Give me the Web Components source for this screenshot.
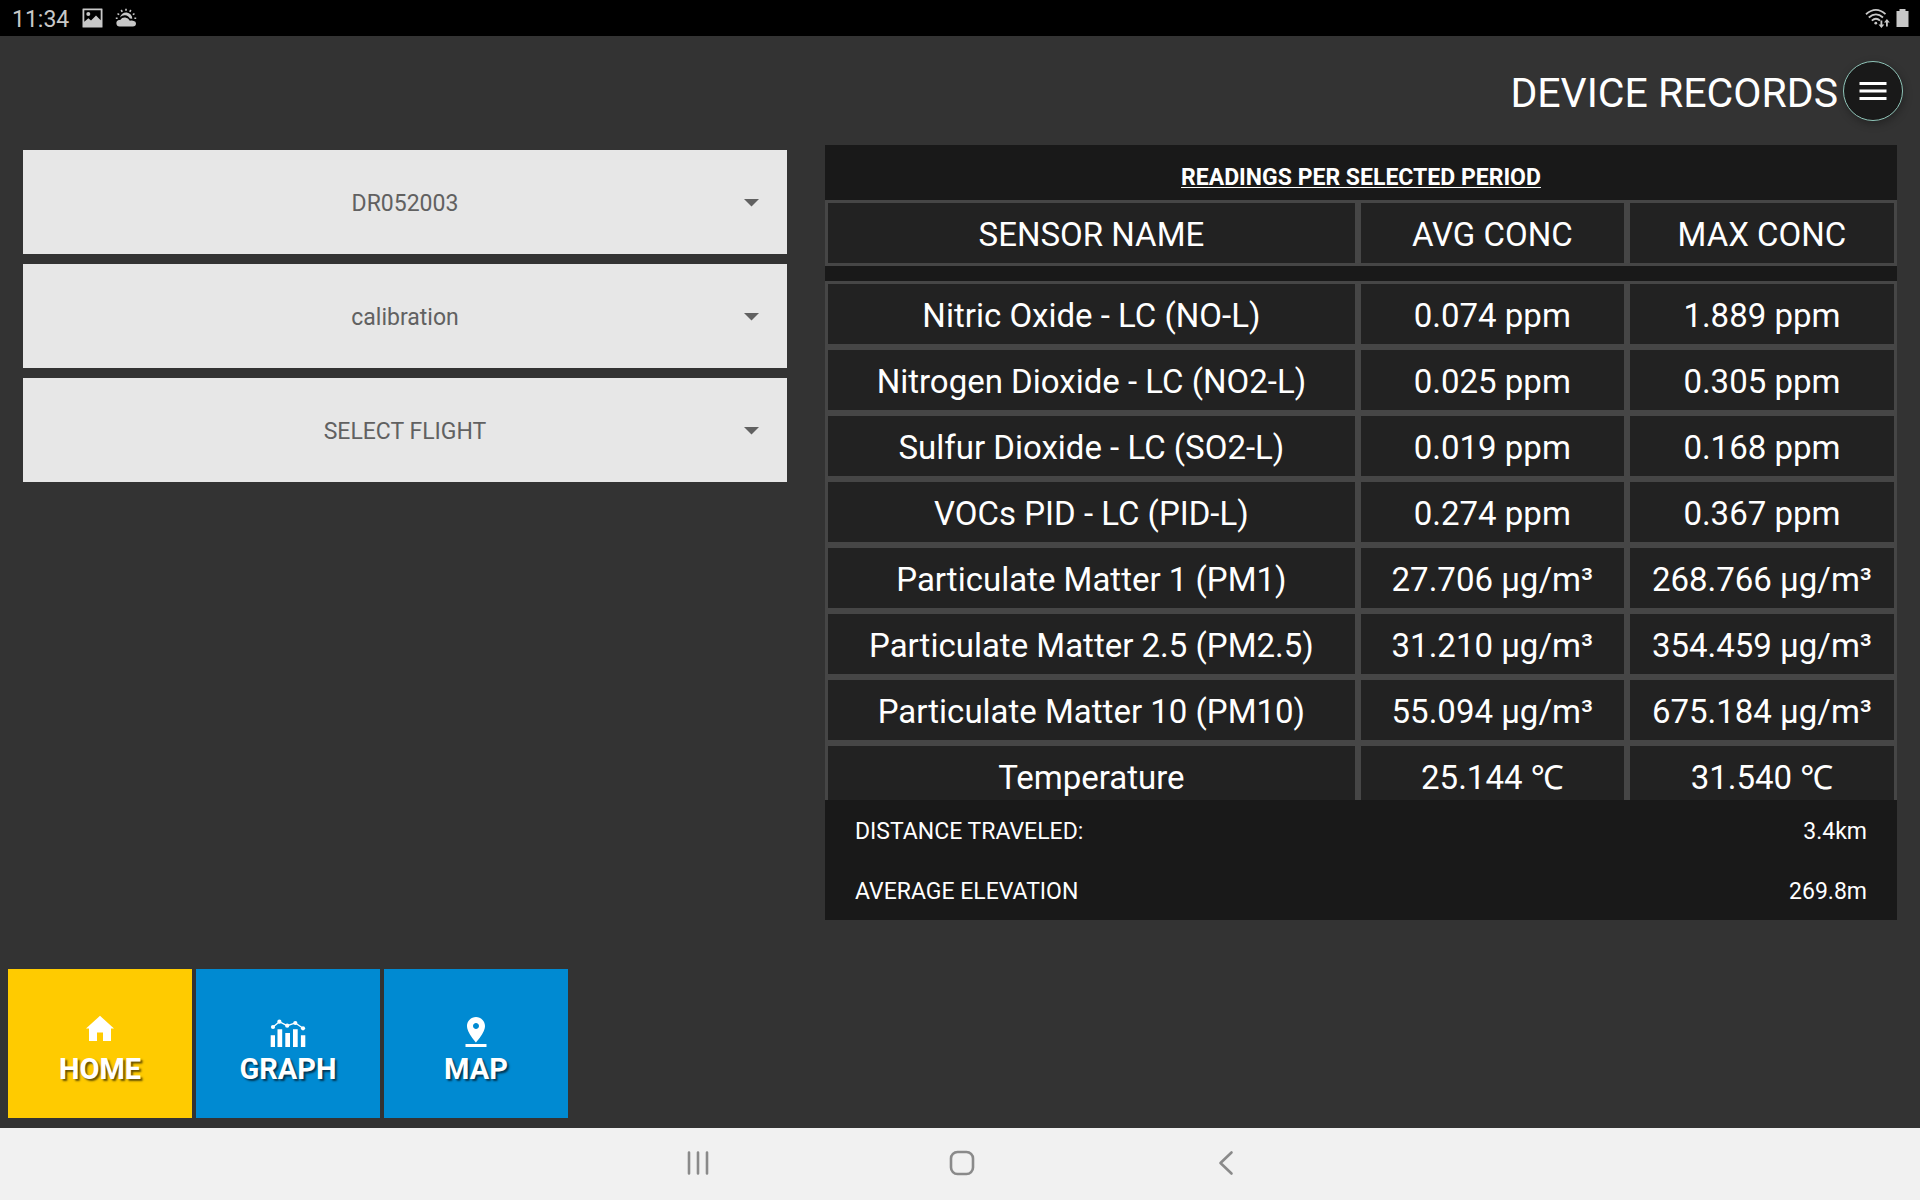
<!DOCTYPE html>
<html lang="en">
<head>
<meta charset="utf-8">
<title>Device Records</title>
<style>
  html, body { margin: 0; height: 100%; }
  body { background: #333; color: #fff; font-family: Roboto, "Noto Sans", sans-serif; }
</style>
</head>
<body>
<records-app></records-app>

<script>
const define = (name, html, setup) => {
  const template = document.createElement('template');
  template.innerHTML = html;
  customElements.define(name, class extends HTMLElement {
    connectedCallback() {
      if (this.shadowRoot) return;
      this.attachShadow({ mode: 'open' }).append(template.content.cloneNode(true));
      if (setup) setup(this, this.shadowRoot);
    }
  });
};

/* Android status bar: clock, notifications, wifi and battery */
define('status-bar', `
<style>
  :host { display: flex; flex: none; align-items: center; justify-content: space-between; height: 36px; padding: 0 11px; background: #000; color: #c8c8c8; }
  div { display: flex; align-items: center; gap: 12px; }
  .right { gap: 6px; }
  time { font-size: 23px; line-height: 32px; padding: 4px 1px 0; }
  svg { display: block; fill: currentColor; }
</style>
<div>
  <time>11:34</time>
  <svg width="21" height="20" viewBox="0 0 21 20" aria-label="Picture"><path fill-rule="evenodd" d="M1 .5h19q.5 0 .5.5v18q0 .5-.5.5H1q-.5 0-.5-.5V1Q.5.5 1 .5zM2.3 2.3v11.500l4-3.600 2.700 2.400 5-5.100 4.700 4.700V2.300z"/><circle cx="6.300" cy="6" r="2"/></svg>
  <svg width="22" height="20" viewBox="0 0 22 20" aria-label="Weather"><path d="M5 9.500a6.200 6.200 0 0 1 12.300 1.200l-2.400-.2A6 6 0 0 0 5 9.500z"/><path d="M4.500 18.500a3.300 3.300 0 0 1-.6-6.500l1.300-.1a5.500 5.500 0 0 1 9.600.8q1-.5 2.200-.2l1.800.4q2.200.4 2.200 2.600 0 3-3.300 3z"/><path d="M11 .8v2M6.200 2l1 1.800M15.800 2l-1 1.800M2.500 5.600l1.700 1M19.500 5.600l-1.700 1M.8 10.200h1.800M19.400 10.200h1.800" fill="none" stroke="currentColor" stroke-width="1.600"/></svg>
</div>
<div class="right">
  <svg width="25" height="20" viewBox="0 0 25 20" aria-label="Wifi"><path d="M1 6.200Q11 -2.500 20.500 6.200M3.800 9.500Q11 3.200 18 9.500M6.800 12.600Q11 9 15 12.600" fill="none" stroke="currentColor" stroke-width="1.800"/><circle cx="10.800" cy="15.200" r="1.400"/><path d="M15.500 12.500h1.800v4h2l-2.900 3.500-2.900-3.500h2zM21 18.500h1.800v-4h2L21.900 11 19 14.500h2z"/></svg>
  <svg width="13" height="20" viewBox="0 0 13 20" aria-label="Battery"><path d="M3.500 1h6v2H12.500v16H.5V3h3z"/></svg>
</div>`);

/* Page heading with the round menu button */
define('page-header', `
<style>
  :host { display: flex; flex: none; align-items: center; justify-content: flex-end; gap: 5px; padding: 25px 17px 24px; }
  h1 { margin: 0; padding-top: 4px; font-size: 41px; line-height: 56px; font-weight: 400; }
  button { display: grid; place-items: center; box-sizing: border-box; width: 60px; height: 60px; padding: 0; border: 1px solid #8fc4b8; border-radius: 50%; background: #191919; color: #fff; box-shadow: 1px 3px 8px rgba(0,0,0,.3); }
  svg { display: block; fill: currentColor; }
</style>
<h1><slot></slot></h1>
<button aria-label="Menu"><svg width="36" height="36" viewBox="0 0 24 24"><path d="M3 18h18v-2H3v2zm0-5h18v-2H3v2zm0-7v2h18V6H3z"/></svg></button>`);

/* Drop-down; its options are passed in as children */
define('select-field', `
<style>
  :host { display: grid; align-items: center; height: 104px; background: #e7e7e7; color: #616161; }
  select, svg { grid-area: 1 / 1; }
  select { appearance: none; box-sizing: border-box; width: 100%; height: 100%; margin: 0; padding: 2px 40px 0; border: 0; border-radius: 0; background: none; color: inherit; font: inherit; font-size: 23px; text-align: center; text-align-last: center; }
  svg { justify-self: end; margin-right: 28px; fill: currentColor; pointer-events: none; }
</style>
<select></select>
<svg width="15" height="10" viewBox="0 0 15 10"><path d="M0 2h15L7.500 9.500z"/></svg>`, (host, root) => {
  const select = root.querySelector('select');
  select.setAttribute('aria-label', host.getAttribute('label'));
  select.append(...host.querySelectorAll('option'));
});

/* Table of sensor readings with a fixed summary under it */
define('readings-panel', `
<style>
  :host { display: flex; flex-direction: column; min-height: 0; background: #191919; }
  h2 { flex: none; margin: 0; padding: 15px 0 4px; font-size: 23px; line-height: 36px; font-weight: 700; text-align: center; text-decoration: underline; text-decoration-thickness: 1px; text-underline-offset: 2px; }
  .scroll { flex: 1; min-height: 0; overflow: auto; scrollbar-width: none; }
  table { width: 100%; table-layout: fixed; border-collapse: separate; border-spacing: 0; }
  th, td { box-sizing: border-box; height: 66px; padding: 4px 0 0; border: 3px solid #464646; background: #222; font-size: 33px; line-height: 56px; font-weight: 400; text-align: center; white-space: nowrap; }
  th:nth-child(1) { width: 49.7%; }
  th:nth-child(2) { width: 25.1%; }
  tbody::before { content: ""; display: table-row; height: 15px; }
</style>
<h2><slot name="title"></slot></h2>
<div class="scroll">
  <table>
    <thead><tr><th>SENSOR NAME</th><th>AVG CONC</th><th>MAX CONC</th></tr></thead>
    <tbody></tbody>
  </table>
</div>
<slot></slot>`, (host, root) => {
  const readings = [
    ['Nitric Oxide - LC (NO-L)', '0.074 ppm', '1.889 ppm'],
    ['Nitrogen Dioxide - LC (NO2-L)', '0.025 ppm', '0.305 ppm'],
    ['Sulfur Dioxide - LC (SO2-L)', '0.019 ppm', '0.168 ppm'],
    ['VOCs PID - LC (PID-L)', '0.274 ppm', '0.367 ppm'],
    ['Particulate Matter 1 (PM1)', '27.706 µg/m³', '268.766 µg/m³'],
    ['Particulate Matter 2.5 (PM2.5)', '31.210 µg/m³', '354.459 µg/m³'],
    ['Particulate Matter 10 (PM10)', '55.094 µg/m³', '675.184 µg/m³'],
    ['Temperature', '25.144 ℃', '31.540 ℃']
  ];
  const body = root.querySelector('tbody');
  for (const reading of readings) {
    const row = body.insertRow();
    for (const value of reading) row.insertCell().textContent = value;
  }
});

define('summary-row', `
<style>
  :host { display: flex; flex: none; align-items: center; justify-content: space-between; box-sizing: border-box; height: 60px; padding: 2px 30px 0; font-size: 23px; }
</style>
<slot name="label"></slot><slot></slot>`);

/* Square navigation button: icon over label */
define('nav-tile', `
<style>
  :host { display: block; width: 184px; }
  button { display: flex; flex-direction: column; align-items: center; box-sizing: border-box; width: 100%; height: 149px; padding: 45px 0 0; border: 0; background: var(--tile, #008ad2); color: #fff; font: inherit; font-size: 29px; line-height: 38px; font-weight: 700; text-shadow: 2px 2px 2px rgba(0,0,0,.6); }
  ::slotted(svg) { display: block; fill: currentColor; }
</style>
<button><slot name="icon"></slot><slot></slot></button>`);

/* Android navigation keys */
define('system-nav', `
<style>
  :host { display: flex; flex: none; justify-content: center; height: 72px; padding-left: 4px; background: #f1f1f1; }
  button { display: grid; place-items: center; width: 264px; padding: 0 0 2px; border: 0; background: none; color: #8a8a8a; }
  svg { display: block; fill: none; stroke: currentColor; stroke-width: 2.600; stroke-linecap: round; }
</style>
<button aria-label="Recents"><svg width="26" height="26" viewBox="0 0 26 26"><path d="M4 2.500v21M13 2.500v21M22 2.500v21"/></svg></button>
<button aria-label="Home"><svg width="26" height="26" viewBox="0 0 26 26"><rect x="2" y="2" width="22" height="22" rx="6.500"/></svg></button>
<button aria-label="Back"><svg width="26" height="26" viewBox="0 0 26 26"><path stroke-linejoin="round" d="M18.500 2.500L7.500 13l11 10.500"/></svg></button>`);

define('records-app', `
<style>
  :host { display: flex; flex-direction: column; height: 100%; }
  main { display: grid; flex: 1; min-height: 0; grid-template-columns: 764fr 1072fr; gap: 38px; padding: 0 23px 49px; }
  .filters { display: flex; flex-direction: column; gap: 10px; padding-top: 5px; }
  nav { display: flex; flex: none; gap: 4px; padding: 0 8px 10px; }
  .home { --tile: #ffcb00; }
</style>
<status-bar></status-bar>
<page-header>DEVICE RECORDS</page-header>
<main>
  <div class="filters">
    <select-field label="Device"><option>DR052003</option></select-field>
    <select-field label="Project"><option>calibration</option></select-field>
    <select-field label="Flight"><option>SELECT FLIGHT</option></select-field>
  </div>
  <readings-panel>
    <span slot="title">READINGS PER SELECTED PERIOD</span>
    <summary-row><span slot="label">DISTANCE TRAVELED:</span>3.4km</summary-row>
    <summary-row><span slot="label">AVERAGE ELEVATION</span>269.8m</summary-row>
  </readings-panel>
</main>
<nav>
  <nav-tile class="home"><svg slot="icon" width="36" height="36" viewBox="0 0 36 36"><path d="M18 1.800L32 14.500h-3V27h-8v-8.500h-6V27H7V14.500H4z"/></svg>HOME</nav-tile>
  <nav-tile><svg slot="icon" width="36" height="36" viewBox="0 0 36 36"><path d="M.7 21.300h4.300V33H.7zM7.500 15.300h4.700V33H7.500zM15.300 19H20v14h-4.700zM23 15.300h4.700V33H23zM30.900 21.300h4.400V33h-4.400z"/><g><circle cx="3" cy="13" r="2.100"/><circle cx="9.400" cy="7.700" r="2.100"/><circle cx="17.200" cy="11.700" r="2.100"/><circle cx="25.300" cy="9" r="2.100"/><circle cx="33" cy="14.300" r="2.100"/></g><path d="M3 13l6.400-5.300 7.800 4L25.300 9l7.700 5.300" fill="none" stroke="currentColor" stroke-width="1.300"/></svg>GRAPH</nav-tile>
  <nav-tile><svg slot="icon" width="36" height="36" viewBox="0 0 24 24"><path d="M18 8c0-3.310-2.690-6-6-6S6 4.690 6 8c0 4.500 6 11 6 11s6-6.500 6-11zm-8 0c0-1.100.9-2 2-2s2 .9 2 2-.89 2-2 2c-1.100 0-2-.9-2-2zM5 20v2h14v-2H5z"/></svg>MAP</nav-tile>
</nav>
<system-nav></system-nav>`);
</script>
</body>
</html>
